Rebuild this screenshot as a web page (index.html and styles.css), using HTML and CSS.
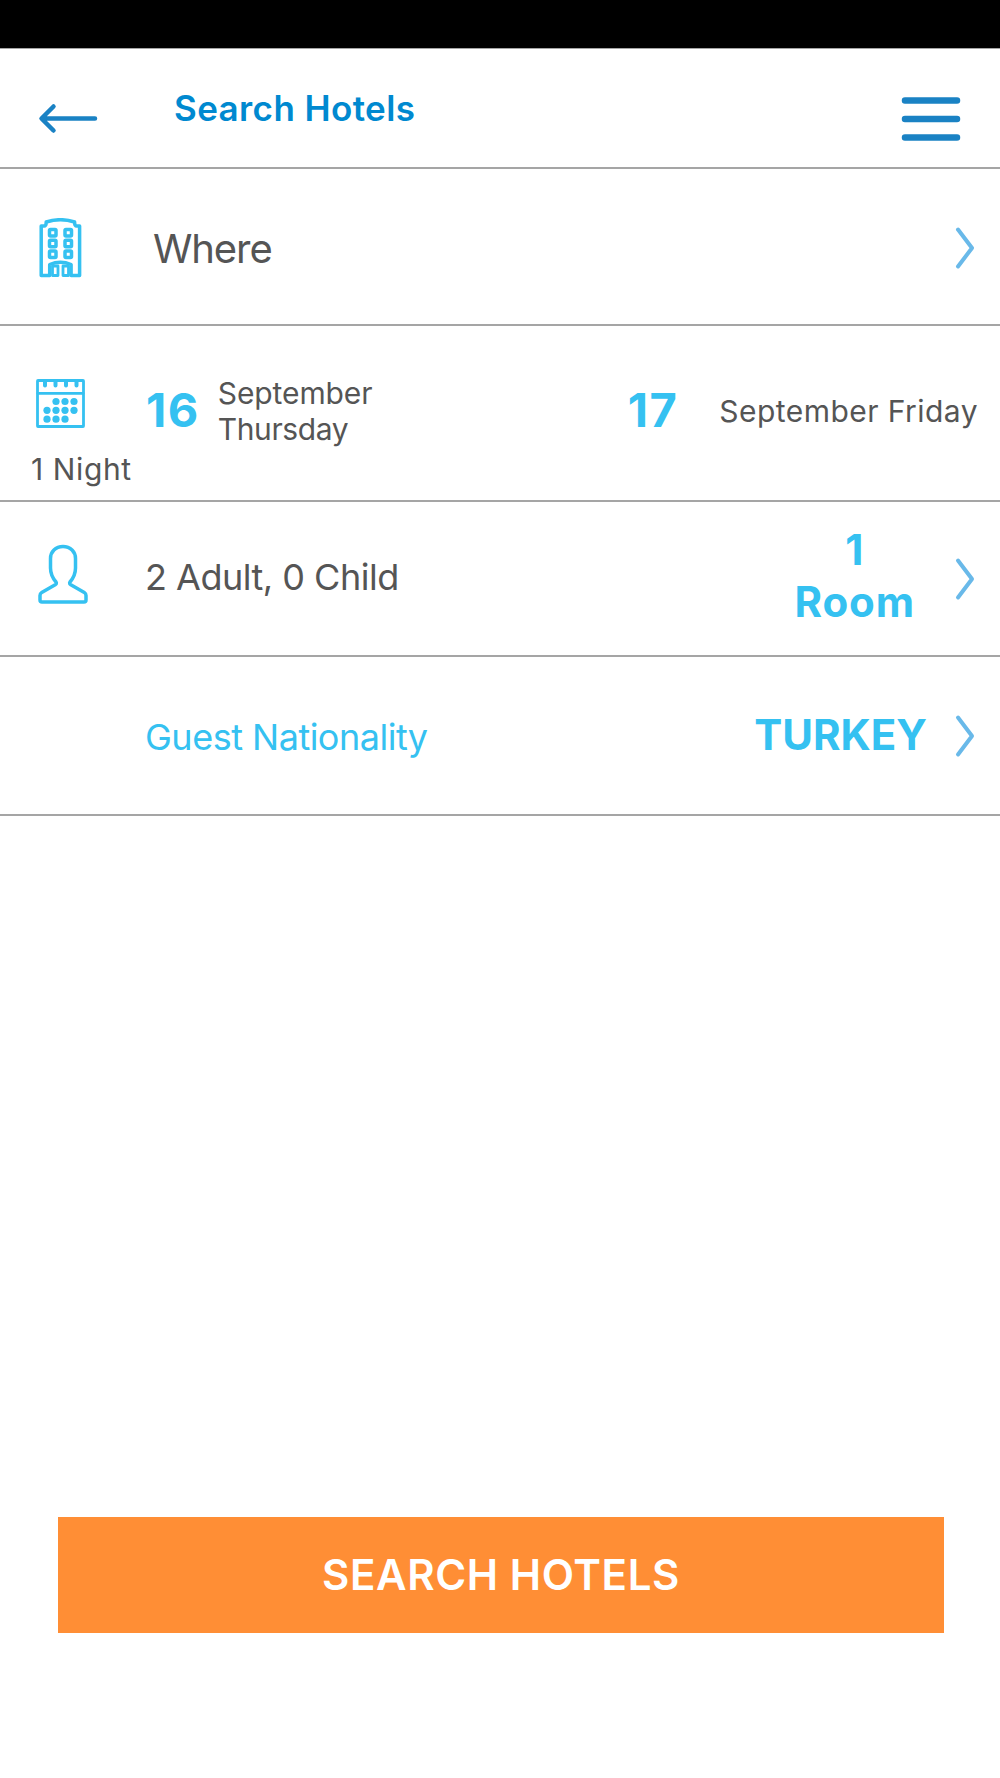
FILE: index.html
```html
<!DOCTYPE html>
<html lang="en">
<head>
  <meta charset="UTF-8">
  <meta name="viewport" content="width=device-width, initial-scale=1.0">
  <title>Search Hotels</title>
  <link rel="stylesheet" href="styles.css">
</head>
<body>
  <div class="status-bar"></div>

  <header class="header">
    <svg class="back" width="60" height="32" viewBox="0 0 60 32">
      <path d="M15.5 3.5 3.5 15.5l12 12M4 15.5h53"/>
    </svg>
    <h1>Search Hotels</h1>
    <svg class="menu" width="60" height="46" viewBox="0 0 60 46">
      <path d="M4 4.5h52M4 23h52M4 41.5h52"/>
    </svg>
  </header>

  <div class="row where">
    <svg class="icon" width="45" height="60" viewBox="0 0 45 60">
      <path d="M3.2 57.5V8h3q2 0 2-4 14.200-4.600 28.400 0 0 4 2 4h3v49.500h-8.500V46.500q-10.700-4.500-21.400 0v11z"/>
      <rect x="11.500" y="11.500" width="6.500" height="6.500" rx="1"/>
      <rect x="27" y="11.500" width="6.500" height="6.500" rx="1"/>
      <rect x="11.500" y="22.200" width="6.500" height="6.500" rx="1"/>
      <rect x="27" y="22.200" width="6.500" height="6.500" rx="1"/>
      <rect x="11.500" y="33" width="6.500" height="6.500" rx="1"/>
      <rect x="27" y="33" width="6.500" height="6.500" rx="1"/>
      <rect class="door" x="14.500" y="48" width="5.500" height="9.500"/>
      <rect class="door" x="25" y="48" width="5.500" height="9.500"/>
    </svg>
    <span class="label">Where</span>
    <svg class="chevron" width="20" height="44" viewBox="0 0 20 44"><path d="M3 3.500 17 22 3 40.500"/></svg>
  </div>

  <div class="row dates">
    <div class="nights">
      <svg class="icon" width="50" height="50" viewBox="0 0 50 50">
        <rect x="2.500" y="2.500" width="46" height="46" rx="0.500"/>
        <path d="M3 15.300h45"/>
        <path class="rings" d="M10 3v4.500M20.500 3v4.500M31 3v4.500M41.500 3v4.500"/>
        <g class="dots">
          <circle cx="21" cy="23.500" r="3.600"/><circle cx="30" cy="23.500" r="3.600"/><circle cx="39" cy="23.500" r="3.600"/>
          <circle cx="12" cy="32.300" r="3.600"/><circle cx="21" cy="32.300" r="3.600"/><circle cx="30" cy="32.300" r="3.600"/><circle cx="39" cy="32.300" r="3.600"/>
          <circle cx="12" cy="41.200" r="3.600"/><circle cx="21" cy="41.200" r="3.600"/><circle cx="30" cy="41.200" r="3.600"/>
        </g>
      </svg>
      <span>1 Night</span>
    </div>
    <div class="date">
      <span class="day">16</span>
      <span class="month">September<br><span class="weekday">Thursday</span></span>
    </div>
    <div class="date checkout">
      <span class="day">17</span>
      <span class="month">September Friday</span>
    </div>
  </div>

  <div class="row guests">
    <svg class="icon" width="52" height="61" viewBox="0 0 52 61">
      <path d="M25 2.500c-7.500 0-12.500 5.500-12.500 12v9.500c0 6 2.500 10.500 5.500 14 .8 1.200.3 2-.8 2.700L3.700 48.500Q2 49.500 2 51.500V56q0 2 2 2h42q2 0 2-2v-4.500q0-2-1.700-3L32.800 40.700c-1.100-.7-1.600-1.500-.8-2.700 3-3.500 5.500-8 5.500-14v-9.500c0-6.500-5-12-12.500-12z"/>
    </svg>
    <span class="label">2 Adult, 0 Child</span>
    <span class="value">1<br>Room</span>
    <svg class="chevron" width="20" height="44" viewBox="0 0 20 44"><path d="M3 3.500 17 22 3 40.500"/></svg>
  </div>

  <div class="row nationality">
    <span class="label">Guest Nationality</span>
    <span class="value">TURKEY</span>
    <svg class="chevron" width="20" height="44" viewBox="0 0 20 44"><path d="M3 3.500 17 22 3 40.500"/></svg>
  </div>

  <button class="search-btn">SEARCH HOTELS</button>
</body>
</html>
```
FILE: styles.css
```css
* {
  box-sizing: border-box;
}

body {
  margin: 0;
  height: 1778px;
  display: flex;
  flex-direction: column;
  background: #fff;
  color: #555;
  font-family: Inter, "Liberation Sans", sans-serif;
}

svg {
  flex: none;
  fill: none;
  stroke-linecap: round;
  stroke-linejoin: round;
}

.status-bar {
  height: 49px;
  background: #000;
  border-bottom: 1px solid #a5a5a5;
}

.header {
  display: flex;
  align-items: center;
  height: 120px;
  padding: 0 39px 0 38px;
  border-bottom: 2px solid #a5a5a5;
}

.header h1 {
  flex: 1;
  margin: 0 0 0 76px;
  color: #0089d0;
  font-size: 35px;
  font-weight: 600;
  letter-spacing: 0.4px;
}

.back,
.menu {
  stroke: #1a82c4;
  margin-top: 22px;
}

.back {
  stroke-width: 4.5;
}

.menu {
  stroke-width: 6.5;
}

.row {
  display: flex;
  align-items: center;
  padding: 0 25px 0 38px;
  border-bottom: 2px solid #a5a5a5;
}

.icon {
  stroke: #35c1f1;
  stroke-width: 3.5;
}

.label {
  flex: 1;
  font-size: 36px;
  letter-spacing: -0.5px;
}

.value {
  color: #35c1f1;
  font-size: 42px;
  font-weight: 700;
  line-height: 52px;
  text-align: center;
}

.chevron {
  stroke: #69b9e9;
  stroke-width: 4;
}

.where {
  height: 157px;
  padding-top: 2px;
}

.where .label {
  margin: 1px 0 0 70px;
  font-size: 40px;
  letter-spacing: -1.1px;
}

.door {
  stroke-width: 2.8;
}

/* check-in and check-out */
.dates {
  height: 176px;
  align-items: flex-start;
  padding: 52px 22px 0 31px;
}

.nights {
  width: 115px;
  font-size: 30px;
  line-height: 36px;
  letter-spacing: 0.6px;
}

.nights .icon {
  display: block;
  margin: 0 0 23px 4px;
  stroke-width: 2.8;
}

.nights .rings {
  stroke-width: 4;
}

.dots {
  fill: #35c1f1;
  stroke: none;
}

.date {
  display: flex;
  align-items: center;
  height: 66px;
}

.day {
  margin-top: -3px;
  color: #35c1f1;
  font-size: 47px;
  font-weight: 700;
  letter-spacing: 1.5px;
}

.month {
  margin-left: 18px;
  font-size: 30px;
  line-height: 36px;
  letter-spacing: -0.1px;
}

.weekday {
  letter-spacing: -0.4px;
}

.checkout {
  margin-left: auto;
}

.checkout .month {
  margin-left: 41px;
  letter-spacing: 0.45px;
}

.guests {
  height: 155px;
}

.guests .icon {
  margin-top: -8px;
}

.guests .label {
  margin: -4px 0 0 55px;
}

.guests .value {
  margin: -6px 40px 0 0;
  letter-spacing: 0.9px;
}

.nationality {
  height: 159px;
}

.nationality .label {
  margin: 2px 0 0 107px;
  color: #35c1f1;
  letter-spacing: -0.5px;
}

.nationality .value {
  margin: -2px 28px 0 0;
}

.search-btn {
  height: 116px;
  margin: auto 56px 145px 58px;
  padding: 0 0 2px;
  border: none;
  background: #ff8e35;
  color: #fff;
  font: 600 42px Inter, "Liberation Sans", sans-serif;
  letter-spacing: 0.6px;
  cursor: pointer;
}
```
